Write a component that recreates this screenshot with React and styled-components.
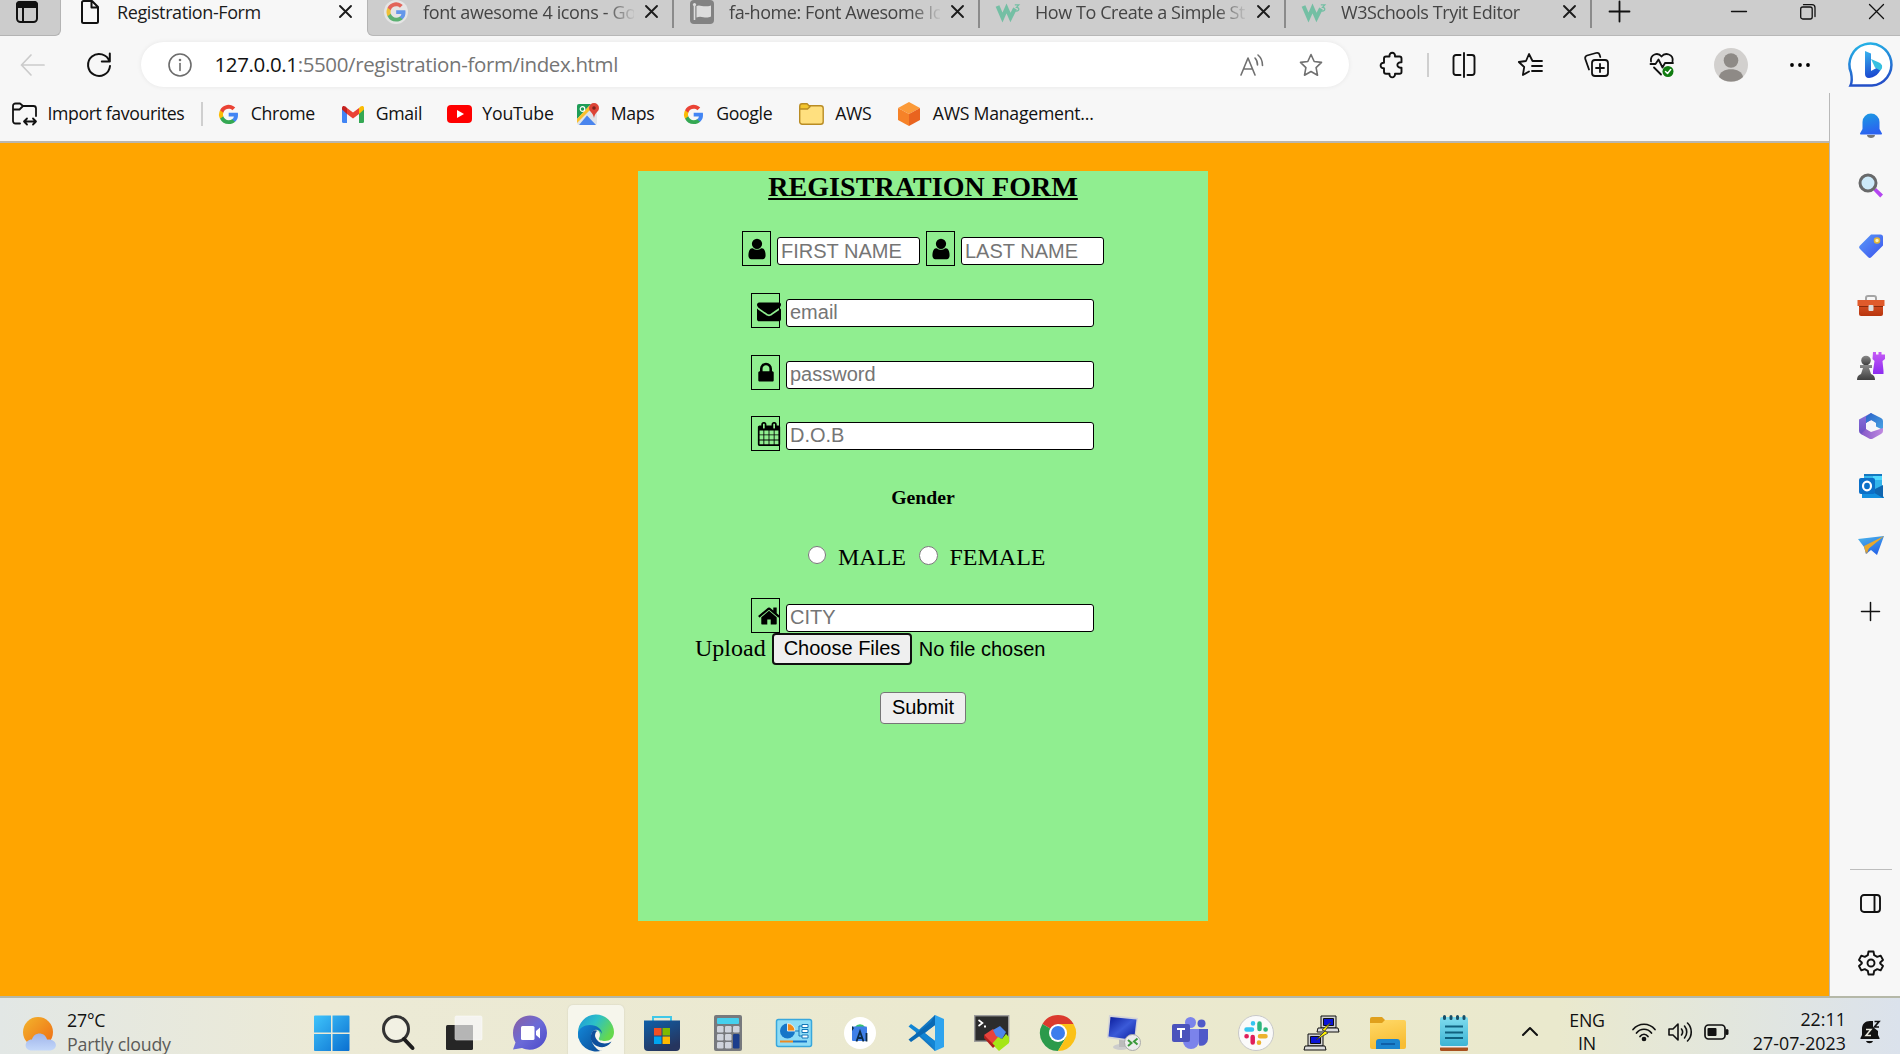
import React from "react";
import styled, { createGlobalStyle } from "styled-components";

const Global = createGlobalStyle`
  * { box-sizing: border-box; }
  body { margin: 0; overflow: hidden; font-family: "Open Sans", "Noto Sans", sans-serif; color: #111; }
  svg { display: block; flex-shrink: 0; overflow: visible; }
`;

/* ---------- layout ---------- */
const Screen = styled.div`
  width: 1900px;
  height: 1054px;
  display: flex;
  flex-direction: column;
  overflow: hidden;
`;
const TabStrip = styled.div`
  height: 36px;
  display: flex;
  background: #f7f7f7;
`;
const TabActions = styled.div`
  width: 61px;
  background: #cccccc;
  border-right: 1px solid #b4b4b4;
  border-bottom: 1px solid #b4b4b4;
  border-bottom-right-radius: 6px;
  padding: 0 0 12px 15px;
  display: flex;
  align-items: center;
`;
const InactiveTabs = styled.div`
  flex: 1;
  display: flex;
  background: #cdcdcd;
  border-left: 1px solid #b4b4b4;
  border-bottom: 1px solid #b8b8b8;
  border-bottom-left-radius: 6px;
`;
const Tab = styled.div`
  width: ${(p) => p.$w || 306}px;
  height: 28px;
  display: flex;
  align-items: center;
  padding: 0 17px 5px ${(p) => (p.$active ? 17 : 16)}px;
  gap: 15px;
  border-right: ${(p) => (p.$active ? "0" : "2px solid #8b8b8b")};
`;
const TabTitle = styled.div`
  width: 211px;
  flex-shrink: 0;
  margin-right: -4px;
  font-size: 18px;
  line-height: 24px;
  letter-spacing: ${(p) => p.$ls || -0.4}px;
  white-space: nowrap;
  color: ${(p) => (p.$active ? "#1b1b1b" : "#444")};
  mask-image: ${(p) => (p.$active ? "none" : "linear-gradient(90deg, #000 86%, transparent 101%)")};
`;
const NewTab = styled.div`
  width: 56px;
  padding-top: 1px;
  display: flex;
  justify-content: center;
  align-items: flex-start;
  margin-left: -1px;
`;
const WindowControls = styled.div`
  margin-left: auto;
  display: flex;
  gap: 53px;
  padding: 4px 16px 0 0;
`;
const Toolbar = styled.div`
  height: 57px;
  display: flex;
  align-items: center;
  background: #f7f7f7;
  padding: 0 5px 0 20px;
`;
const Gap = styled.div`
  width: ${(p) => p.$w}px;
  flex-shrink: 0;
`;
const AddressBar = styled.div`
  width: 1208px;
  height: 45px;
  border-radius: 23px;
  background: #fff;
  box-shadow: 0 0 5px rgba(0, 0, 0, 0.07);
  display: flex;
  align-items: center;
  flex-shrink: 0;
  padding: 0 26px 0 27px;
`;
const Url = styled.div`
  flex: 1;
  padding: 0 0 2px 22.5px;
  font-size: 20.5px;
  letter-spacing: -0.37px;
  color: #757575;
  white-space: nowrap;
`;
const Host = styled.span`
  color: #111;
`;
const Divider = styled.div`
  width: 2px;
  height: 24px;
  background: #cfcfcf;
  flex-shrink: 0;
`;
const Body = styled.div`
  height: 903px;
  display: flex;
`;
const Content = styled.div`
  width: 1829px;
  display: flex;
  flex-direction: column;
`;
const FavouritesBar = styled.div`
  height: 50px;
  background: #f7f7f7;
  border-bottom: 2px solid #bbb7ae;
  display: flex;
  align-items: flex-start;
  padding-left: 12px;
`;
const Favourite = styled.div`
  height: 42px;
  width: ${(p) => p.$w}px;
  display: flex;
  align-items: center;
  flex-shrink: 0;
`;
const FavIcon = styled.div`
  width: ${(p) => p.$w}px;
  flex-shrink: 0;
`;
const FavText = styled.div`
  font-size: 17.7px;
  letter-spacing: ${(p) => p.$ls || -0.36}px;
  padding-bottom: 2px;
  white-space: nowrap;
`;
const Page = styled.div`
  flex: 1;
  background: orange;
  padding: 28px 0 0 638px;
`;
const Sidebar = styled.div`
  width: 71px;
  background: #f7f7f7;
  border-left: 1px solid #b9b9b9;
  display: flex;
  flex-direction: column;
  align-items: center;
  padding: 3px 0 3px 11px;
`;
const SideCell = styled.div`
  height: ${(p) => p.$h || 60}px;
  display: flex;
  align-items: center;
  justify-content: center;
`;
const SideRule = styled.div`
  margin-top: auto;
  margin-bottom: 3px;
  width: 42px;
  height: 1px;
  background: #bdbdbd;
`;

/* ---------- form ---------- */
const Form = styled.div`
  width: 570px;
  height: 750px;
  background: lightgreen;
  display: flex;
  flex-direction: column;
  font-family: "Liberation Serif", "Times New Roman", serif;
  color: #000;
`;
const Heading = styled.h2`
  margin: 0 0 29px;
  text-align: center;
  font-size: 28px;
  letter-spacing: 0.08px;
  line-height: 31px;
  text-decoration: underline;
  text-decoration-thickness: 2px;
  text-underline-offset: 2px;
`;
const FormRow = styled.div`
  display: flex;
  align-items: flex-end;
  gap: 6px;
  height: 35px;
  flex-shrink: 0;
  margin: 0 0 ${(p) => p.$after ?? 27}px ${(p) => p.$indent || 113}px;
`;
const IconBox = styled.div`
  width: 29px;
  height: 35px;
  border: 1px solid #000;
  display: flex;
  flex-shrink: 0;
  padding: ${(p) => p.$top || 5}px 0 0 ${(p) => p.$left || 5}px;
`;
const TextField = styled.input`
  width: ${(p) => p.$w || 308}px;
  height: 28px;
  margin: 0 0 1px;
  padding: 0 3px ${(p) => (p.$w ? 0 : 1)}px;
  border: 1px solid #000;
  border-radius: 3px;
  background: #fff;
  font: 20px "Liberation Sans", Arial, sans-serif;
  &::placeholder { color: #757575; opacity: 1; }
`;
const GenderTitle = styled.h5`
  margin: 8px 0 35px;
  text-align: center;
  font-size: 19.8px;
  line-height: 22px;
`;
const GenderRow = styled.div`
  height: 28px;
  display: flex;
  padding-left: 170px;
  margin-bottom: 27px;
  font-size: 24px;
  line-height: 28px;
`;
const Radio = styled.input`
  width: ${(p) => p.$s}px;
  height: ${(p) => p.$s}px;
  margin: 3px 12px 0 0;
  flex-shrink: 0;
`;
const RadioLabel = styled.label`
  width: ${(p) => p.$w}px;
`;
const UploadRow = styled.div`
  display: flex;
  height: 32px;
  padding-left: 57px;
  gap: 6px;
  font-size: 24px;
  line-height: 30px;
  margin-bottom: 27px;
`;
const UploadLabel = styled.label`
  width: 71px;
`;
const FormButton = styled.button`
  width: ${(p) => p.$w}px;
  height: 32px;
  margin: 0 0 0 ${(p) => p.$indent || 0}px;
  padding: 0 0 ${(p) => (p.$focus ? 2 : 1)}px;
  flex-shrink: 0;
  background: #efefef;
  color: #000;
  border: ${(p) => (p.$focus ? "2px solid #101010" : "1px solid #767676")};
  border-radius: 4px;
  font: 20px "Liberation Sans", Arial, sans-serif;
  white-space: nowrap;
`;
const FileStatus = styled.span`
  padding-left: 0.7px;
  font: 20px/32px "Liberation Sans", Arial, sans-serif;
`;

/* ---------- taskbar ---------- */
const Taskbar = styled.div`
  height: 58px;
  flex-shrink: 0;
  border-top: 2px solid #b5b8a8;
  background: linear-gradient(90deg, #e2e7e5 0, #ecead6 17%, #ebe9cf 50%, #eae9cd 82%, #e2e6dd 91%, #dbe2ec 100%);
  display: flex;
`;
const Weather = styled.div`
  width: 298.5px;
  padding-left: 22px;
  display: flex;
  gap: 10px;
`;
const WeatherIcon = styled.div`
  padding-top: 18px;
`;
const Stack = styled.div`
  width: ${(p) => p.$w || "auto"};
  display: flex;
  flex-direction: column;
  padding-top: ${(p) => p.$top || 9}px;
  text-align: ${(p) => p.$align || "left"};
  font-size: 17.8px;
  line-height: ${(p) => p.$lh || 24}px;
  letter-spacing: ${(p) => p.$ls ?? -0.22}px;
  white-space: nowrap;
`;
const Muted = styled.span`
  color: #5b5b58;
`;
const AppCell = styled.div`
  width: 66px;
  height: 70px;
  flex-shrink: 0;
  display: flex;
  align-items: center;
  justify-content: center;
`;
const ActiveTile = styled.div`
  width: 56px;
  height: 56px;
  border-radius: 5px;
  background: #f6f6ec;
  box-shadow: 0 0 2px rgba(0, 0, 0, 0.12);
  display: flex;
  align-items: center;
  justify-content: center;
`;
const Tray = styled.div`
  flex: 1;
  display: flex;
`;
const TrayIcon = styled.div`
  width: ${(p) => p.$w}px;
  height: 67px;
  display: flex;
  align-items: center;
  flex-shrink: 0;
`;

/* ---------- drawing helpers ---------- */
const Line = ({ w = 24, h = 24, box = "0 0 24 24", c = "#111", sw = 1.6, children }) => (
  <svg width={w} height={h} viewBox={box} fill="none" stroke={c} strokeWidth={sw} strokeLinecap="round" strokeLinejoin="round">
    {children}
  </svg>
);
const Pic = ({ w = 36, h = 36, box = "0 0 36 36", children, ...r }) => (
  <svg width={w} height={h} viewBox={box} {...r}>{children}</svg>
);
const Grad = ({ id, a, b, x2 = 1, y2 = 1, m }) => (
  <linearGradient id={id} x1="0" y1="0" x2={x2} y2={y2}>
    <stop offset="0" stopColor={a} />
    {m && <stop offset=".5" stopColor={m} />}
    <stop offset="1" stopColor={b} />
  </linearGradient>
);
const Hidden = styled.svg`
  position: absolute;
  width: 0;
  height: 0;
`;
const Gradients = () => (
  <Hidden>
    <defs>
      <Grad id="bell" a="#1b9de2" b="#2b62f0" x2={0.3} />
      <Grad id="tag" a="#5b9bf8" b="#3b52ee" />
      <Grad id="purple" a="#c65bf5" b="#8c2bf0" x2={0} />
      <Grad id="pawn" a="#8a8a8a" b="#3f3f3f" x2={0} />
      <Grad id="box" a="#e0592a" b="#b8350e" x2={0} />
      <Grad id="sun" a="#f3b52c" b="#ee6a14" />
      <Grad id="cloud" a="#9fb4ea" b="#c4d8fa" x2={0} />
      <Grad id="win" a="#3fc4fb" b="#0a6fd0" />
      <Grad id="chat" a="#8a5fa0" m="#6b6bd8" b="#4b48c8" />
      <Grad id="store" a="#0f5fa8" b="#26355e" x2={0.5} />
      <Grad id="edgeTop" a="#1d96d8" m="#2cc0c8" b="#65d84e" y2={0.5} />
      <Grad id="edgeLow" a="#1387d8" b="#0b4a94" />
      <Grad id="bingRing" a="#25b8e8" b="#2450c8" x2={0.2} />
      <Grad id="bingB" a="#39b4ee" b="#1b48d0" x2={0.2} />
      <Grad id="folder" a="#ffd968" b="#f8bd34" x2={0.3} />
      <Grad id="note" a="#7fdcee" b="#3db4d4" x2={0} />
      <Grad id="rdp" a="#0a1c9c" m="#3b5ad8" b="#0a1c9c" />
      <Grad id="plane" a="#4cb8ea" b="#2767e8" x2={0.5} />
      <Grad id="m1" a="#8a74dc" b="#6a4cc0" x2={0} />
      <Grad id="m2" a="#2c62c8" b="#48a4e4" />
      <Grad id="m3" a="#8458c8" b="#c08ae0" y2={0} />
    </defs>
  </Hidden>
);

const Google = ({ s = 19 }) => (
  <svg width={s} height={s} viewBox="2 2 20 20">
    <path fill="#4285F4" d="M22 12.2c0-.7-.06-1.4-.18-2.1H12.2v3.9h5.5a4.7 4.7 0 0 1-2 3.1v2.6H19a10 10 0 0 0 3-7.5z" />
    <path fill="#34A853" d="M12.2 22c2.8 0 5.1-.9 6.8-2.4l-3.3-2.6c-.9.6-2.1 1-3.5 1-2.7 0-4.9-1.8-5.7-4.2H3.1v2.6A10 10 0 0 0 12.2 22z" />
    <path fill="#FBBC05" d="M6.5 13.8a6 6 0 0 1 0-3.7V7.5H3.1a10 10 0 0 0 0 9z" />
    <path fill="#EA4335" d="M12.2 6c1.5 0 2.9.5 3.9 1.5l3-2.9A10 10 0 0 0 3.1 7.5l3.4 2.6C7.3 7.700 9.500 6 12.200 6z" />
  </svg>
);
const GoogleTab = () => (
  <Pic w={24} h={24} box="0 0 24 24" opacity=".75">
    <circle cx="12" cy="12" r="12" fill="#eee" />
    <g transform="translate(2.500 2.500)"><Google s={19} /></g>
  </Pic>
);
const FlagTab = () => (
  <Pic w={24} h={24} box="0 0 24 24">
    <rect width="24" height="24" rx="4" fill="#828282" />
    <path d="M4.500 4v16" stroke="#ddd" strokeWidth="1.600" />
    <circle cx="4.500" cy="4.500" r="1.600" fill="#ddd" />
    <path d="M6.500 6c4-2 6 2 14.500-.5v11c-6 3-9-1.500-14.500 1z" fill="#dcdcdc" />
  </Pic>
);
const W3Tab = () => (
  <Pic w={24} h={24} box="0 0 24 24">
    <path d="M1.500 6l5 11.500 4-9 4 9 4.500-9" fill="none" stroke="#74bfa4" strokeWidth="4" />
    <path d="M18.800 4.800h4l-2.200 2.600c3.200 0 2.600 4-.2 3.600-.8 0-1.400-.4-1.800-1" fill="none" stroke="#74bfa4" strokeWidth="1.300" />
  </Pic>
);
const CloseX = () => (
  <Line w={13} h={13} box="0 0 13 13" sw={1.9} c="#1c1c1c"><path d="M1 1l11 11M12 1L1 12" /></Line>
);
const DocIcon = () => (
  <Line w={24} h={24} box="0 0 24 24" sw={2}><path d="M5.500 1H14l6 6v14.500a1.500 1.500 0 0 1-1.500 1.500h-13A1.500 1.500 0 0 1 4 21.500v-19A1.500 1.500 0 0 1 5.500 1zM13.500 1v6.500H20" /></Line>
);

const STAR = "M12 1.500l3.200 7 7.300.9-5.400 5.200 1.400 7.600L12 18.500l-6.500 3.700 1.400-7.600L1.500 9.400l7.300-.9z";

const ToolIcons = {
  puzzle: <Line w={24} h={26} box="0 0 24 26" sw={1.900}><path d="M4 6.500C4 5 5 4.500 6 4.500h3.500c-.5-5 6-5 5.500 0h4.500c1 0 2 .8 2 2v3.800c-5.500-.8-5.500 6.200 0 5.400V20c0 1-.9 1.800-2 1.800H15c.5 4.700-6 4.700-5.500 0H6c-1 0-2-.8-2-2v-3.500c-4.500.4-4.500-6 0-5.600z" /></Line>,
  split: <Line w={24} h={24} sw={1.900}><path d="M8.500 2H4a2.500 2.500 0 0 0-2.500 2.500v15A2.500 2.500 0 0 0 4 22h4.500M15.500 2H20a2.500 2.500 0 0 1 2.500 2.500v15A2.500 2.500 0 0 1 20 22h-4.500M12 0v24" /></Line>,
  favs: <Line w={25} h={24} box="0 0 25 24" sw={1.800}><path d="M15.500 8h-1L11 1 8 8 .8 9l5.400 5-1.300 8L11 18.500M15.500 8H24M14 13h10M14 18h10" /></Line>,
  collections: <Line w={25} h={25} box="0 0 25 25" sw={1.800}><rect x="8" y="8" width="16" height="16" rx="3" /><path d="M16 12v8M12 16h8M5 17.500L1.300 7C.8 5 1.500 4 3 3.500L12 1c2-.5 3 0 3.500 1.500l.8 2.500" /></Line>,
  health: <Line w={26} h={25} box="0 0 26 25" sw={1.800}><path d="M2 9.500C1 2 9 0 12.500 4.500 16 0 25 2 23.500 9.500M1.500 12h5l3-4.500 4 8L16 11h8M5 15.500l7 7" /><circle cx="19" cy="19.500" r="5.500" fill="#107c10" stroke="none" /><path d="M16.500 19.500l2 2 3.200-4" stroke="#fff" strokeWidth="1.500" /></Line>,
};

/* ---------- sidebar pictures ---------- */
const sideIcons = [
  <Pic w={24} h={26} box="0 0 24 26"><path d="M8 22h8c0 4-8 4-8 0z" fill="#777" /><path d="M3.500 9a8.500 8.500 0 0 1 17 0v7l2.500 4.500c0 .6-.4 1-1 1H2c-.6 0-1-.4-1-1L3.500 16z" fill="url(#bell)" /></Pic>,
  <Pic w={26} h={26} box="0 0 26 26"><path d="M15.500 17.500l2.500-2.500 7 6.500-2.800 3z" fill="#b445f0" /><circle cx="10" cy="10" r="8" fill="#cdeaf9" stroke="#68696a" strokeWidth="3" /></Pic>,
  <Pic w={26} h={26} box="0 0 26 26"><path d="M13 1.500h9.500A2.500 2.500 0 0 1 25 4v8.500L13.500 24c-1.200 1.200-2.400 1.200-3.500 0l-8-8c-1.200-1.200-1.200-2.300 0-3.500z" fill="url(#tag)" /><circle cx="19" cy="7.500" r="2.500" fill="#fff2b0" stroke="#e2b537" strokeWidth="1.500" /></Pic>,
  <Pic w={28} h={22} box="0 0 28 22"><path d="M9 6V3a2 2 0 0 1 2-2h6a2 2 0 0 1 2 2v3" fill="none" stroke="#a5a5a5" strokeWidth="2" /><rect x="2" y="5" width="24" height="16" rx="2" fill="url(#box)" /><path d="M0.500 5h27v6h-27z" fill="#e05a2b" /><path d="M2 11.500h24" stroke="#8a2a0c" /><rect x="11.500" y="10" width="5" height="6" rx="1" fill="#ddd" /></Pic>,
  <Pic w={28} h={28} box="0 0 28 28"><path d="M16 0h3v2.500h2.500V0h3v2.500H28V7l-2.500 2 1 10v3H16v-3l1.500-10L15.500 7z" fill="url(#purple)" /><circle cx="9" cy="8.500" r="4.800" fill="url(#pawn)" /><path d="M3 13h12v3h-3l2 6c3 1 4 3 4 6H0c0-3 1-5 4-6l2-6H3z" fill="url(#pawn)" /></Pic>,
  <Pic w={26} h={26} box="0 0 26 26"><path d="M13 0L1 6.500V18q0 2 2 3l5 2V10l9-5z" fill="url(#m1)" /><path d="M13 0l10 5q2 1 2 3v9l-7-3.500V10l-5-3-5 3V3.500z" fill="url(#m2)" /><path d="M25 15v3q0 2-2 3l-8 4.500q-2 1-4 0L3 21l5-5 5 3z" fill="url(#m3)" /><circle cx="13" cy="13" r="4.800" fill="#f5f5fb" /></Pic>,
  <Pic w={26} h={26} box="0 0 26 26"><path d="M6 1h18v15H6z" fill="#33b5ec" /><path d="M15 1h9v6h-9z" fill="#50d9ff" /><path d="M6 1h18v2H6z" fill="#1478c0" /><path d="M4 11l22 13v1H4z" fill="#1490df" /><path d="M25 12v13L13 18z" fill="#1066b0" /><rect x="1" y="5" width="16" height="16" rx="2" fill="#0b70c8" /><ellipse cx="9" cy="13" rx="4" ry="4.300" fill="none" stroke="#fff" strokeWidth="2.200" /></Pic>,
  <Pic w={28} h={22} box="0 0 28 22"><path d="M1 4L27 1 20 20l-6-5-5 4-2-7z" fill="url(#plane)" /><path d="M27 1L8 12l2 7 2-6z" fill="#d59a35" /><path d="M7 11L27 1 10 15l-1 4z" fill="#e9a82e" /></Pic>,
];

/* ---------- taskbar pictures ---------- */
const Putty = ({ x, y }) => (
  <g transform={`translate(${x} ${y})`} stroke="#111" strokeWidth="1">
    <path d="M4 1h15v12H4z" fill="#d2d2d2" /><path d="M6.500 3.500h10v7h-10z" fill="#0a14d8" /><path d="M1 13h20l1 4H0z" fill="#ddd" />
  </g>
);
const apps = [
  <Pic><g fill="url(#win)"><path d="M0 1.500Q0 .5 1 .5h16v17H0zM18.500.5H34.500q1 0 1 1v16h-17zM0 19h17v17H1q-1 0-1-1zM18.500 19h17v16q0 1-1 1h-16z" /></g></Pic>,
  <Pic w={34} box="0 0 34 36"><circle cx="15" cy="14" r="12.500" fill="rgba(255,255,255,.35)" stroke="#333" strokeWidth="3" /><path d="M23 24l8.500 9" stroke="#1d1d1d" strokeWidth="4" strokeLinecap="round" /></Pic>,
  <Pic><rect x="0" y="10" width="27" height="25" rx="1.500" fill="#262626" /><rect x="9" y="1" width="27" height="24" rx="1.500" fill="#f6f6f6" fillOpacity=".82" stroke="#fff" strokeWidth=".5" /><path d="M9 10h18v15H9z" fill="#9a9a9a" fillOpacity=".5" /></Pic>,
  <Pic w={34} box="0 0 34 36"><path d="M17 .5C7 .5 0 8 0 18c0 4 1 7 2.500 9.500L0 34.500l9-1.500c12 5.500 25-3 25-15C34 8 27 .5 17 .5z" fill="url(#chat)" /><rect x="8" y="11" width="13.500" height="14" rx="1.500" fill="#fff" /><path d="M23 16l4-3.500v11L23 20z" fill="#fff" /></Pic>,
  null,
  <Pic><path d="M9 8V2h18v6" fill="none" stroke="#41c8e8" strokeWidth="2" /><path d="M0 5.500h36V32a4 4 0 0 1-4 4H4a4 4 0 0 1-4-4z" fill="url(#store)" /><path d="M10 13h7.500v7.500H10z" fill="#f25022" /><path d="M18.500 13H26v7.500h-7.500z" fill="#7fba00" /><path d="M10 21.500h7.500V29H10z" fill="#00a4ef" /><path d="M18.500 21.500H26V29h-7.500z" fill="#ffb900" /></Pic>,
  <Pic w={28} box="0 0 28 36"><rect width="28" height="36" rx="2" fill="#77797d" /><rect x="3" y="3" width="22" height="6" rx="1" fill="#45d0ee" />{[11, 19, 27].map((y) => [3, 11, 19].map((x) => (x === 19 && y > 11 ? null : <rect key={x + "-" + y} x={x} y={y} width="6.500" height="6.500" rx="1.200" fill="#cfd3dc" />)))}<rect x="19" y="19" width="6.500" height="14.500" rx="1.200" fill="#1c3e8c" /></Pic>,
  <Pic h={28} box="0 0 36 28"><rect x=".5" y=".5" width="35" height="27" rx="2" fill="#8edcf6" stroke="#38a7dc" strokeWidth="1.500" /><circle cx="11.500" cy="12" r="7.500" fill="#1676c8" /><path d="M11.500 12V4.500A7.500 7.500 0 0 1 19 12z" fill="#f08a1c" stroke="#fff" strokeWidth=".8" /><path d="M19 12h4V7h3M23 12v5h3" fill="none" stroke="#1477b8" /><path d="M26 5.500h6v3h-6zM26 10.500h6v3h-6zM26 16h6v3h-6z" fill="#fff" stroke="#1477b8" /><path d="M4 22.500h13" stroke="#ee8a22" strokeWidth="2" /><path d="M17 22.500h14" stroke="#1676c8" strokeWidth="2" /></Pic>,
  <Pic w={32} h={32} box="0 0 32 32"><circle cx="16" cy="16" r="16" fill="#fff" /><path d="M11 10a5.500 4.500 0 0 1 10 0z" fill="#38c172" /><rect x="8" y="9.500" width="15" height="14.500" rx="1" fill="#3f7fe8" /><path d="M8 9l2 2-2 3z" fill="#0d2c48" /><path d="M12.500 24.500l3.500-10 3.500 10M14 21h4M22.500 16v8.500" fill="none" stroke="#0d2c48" strokeWidth="1.800" /></Pic>,
  <Pic><path d="M27 0L7.500 18 27 36l1-9-11-9 11-9z" fill="#1579c4" /><path d="M3 9L.5 11.500 23 29l4 7 1-9.500z" fill="#1285d4" /><path d="M3 27L.5 24.500 23 7l4-7 1 9.500z" fill="#0a69b4" /><path d="M27 0l9 4v28l-9 4z" fill="#2ea3ee" /></Pic>,
  <Pic><rect x=".7" y=".7" width="34" height="25.500" fill="#2c2c2c" stroke="#9b9b9b" strokeWidth="1.400" /><path d="M4.500 5l4 3-4 3" stroke="#fff" strokeWidth="1.600" fill="none" /><path d="M10 11.500h2" stroke="#fff" strokeWidth="2" /><path d="M10 20l9-6 4 4 3 5-7 9z" fill="#e8433c" /><path d="M19 15l7-4 6 6-4 7-6-3z" fill="#4d86ea" /><path d="M18 29l6-7 4 2 4-5 3 3v6l-10 8z" fill="#a5e616" /><path d="M10 20v3l9 10 2-2z" fill="#b0201c" /></Pic>,
  <Pic><path d="M18 18L2.400 9A18 18 0 0 1 33.600 9z" fill="#db3a2e" /><path d="M18 18L2.400 9A18 18 0 0 0 18 36l8-13.500z" fill="#2b9a4b" /><path d="M18 9h15.600A18 18 0 0 1 18 36l8-13.500z" fill="#fbc116" /><circle cx="18" cy="18" r="9" fill="#fff" /><circle cx="18" cy="18" r="7" fill="#3b7ded" /></Pic>,
  <Pic><ellipse cx="15" cy="32" rx="8" ry="3" fill="#ccc" /><path d="M13 24h6v8h-6z" fill="#bbb" /><path d="M3 0l29 3-3 24L1 23z" fill="#d3d3d8" /><path d="M4.500 2l26 2.500L28 25 2.500 21.500z" fill="url(#rdp)" /><circle cx="26.500" cy="27.500" r="8" fill="#ececec" stroke="#aaa" /><path d="M22 25l3.500 3-3.500 3M31.500 23.500l-3.500 3 3.500 3" stroke="#3c9a3c" strokeWidth="2" fill="none" /></Pic>,
  <Pic><circle cx="18.500" cy="7.500" r="5.500" fill="#7b83eb" /><circle cx="29.500" cy="8.500" r="4" fill="#5059c9" /><path d="M25 14h11v10a7 7 0 0 1-9 6.500z" fill="#5059c9" /><path d="M11 14h16v12a8 8 0 0 1-16 0z" fill="#7b83eb" /><rect y="9" width="18" height="18" rx="2" fill="#4b53bc" /><path d="M5 14h8M9 14v9" stroke="#fff" strokeWidth="2" /></Pic>,
  <Pic><circle cx="18" cy="18" r="17.500" fill="#fafafa" stroke="#c8c8c8" /><g strokeWidth="4.500" strokeLinecap="round"><g stroke="#36c5f0"><path d="M8.500 14.500H14M15 8.200v.2" /></g><g stroke="#2eb67d"><path d="M21.500 8.500V14M27.500 14.500h.2" /></g><g stroke="#ecb22e"><path d="M22 21.200h5.500M21 27.500v.2" /></g><g stroke="#e01e5a"><path d="M14.700 22v5.500M8.500 21.200h.2" /></g></g></Pic>,
  <Pic><Putty x={13} y={0} /><Putty x={0} y={18} /><path d="M27 7l-9 8 3 1-9 9 12-7-3-2z" fill="#fff200" stroke="#333" strokeWidth=".8" /></Pic>,
  <Pic><path d="M0 4a2 2 0 0 1 2-2h10l4 4v4H0z" fill="#e0a01c" /><path d="M0 8h12l3-3h19a2 2 0 0 1 2 2v25a2 2 0 0 1-2 2H2a2 2 0 0 1-2-2z" fill="url(#folder)" /><path d="M6 34v-7a3 3 0 0 1 3-3h18a3 3 0 0 1 3 3v7z" fill="#1b85cf" /><path d="M11 29h14" stroke="#0d5ba5" strokeWidth="1.800" /></Pic>,
  <Pic w={28} box="0 0 28 36"><rect x="0" y="31" width="28" height="5" rx="1.500" fill="#a9511f" /><rect x="0" y="29" width="28" height="3.500" fill="#eee" /><rect y="2" width="28" height="29" rx="2" fill="url(#note)" /><g stroke="#10617f" strokeWidth="1.800"><path d="M5 11.500h18M5 17.500h18M5 23h18" /></g><g stroke="#174e66" strokeWidth="3" strokeLinecap="round"><path d="M4.500 1.500v2M11 1.500v2M17.500 1.500v2M24 1.500v2" /></g></Pic>,
];
const Edge = () => (
  <Pic>
    <path d="M0 18A18 18 0 0 1 36 17c0 6-4 9-9 9-4 0-7-1-6-3 2-3 1-9-6-9-8 0-13 5-15 10z" fill="url(#edgeTop)" />
    <path d="M0 18c1-5 6-8 12-8 7 0 12 4 12 9-1-3-4-5-7-4-6 2-5 13 2 19 2 2 5 2 5 1.500A18 18 0 0 1 0 18z" fill="url(#edgeLow)" />
    <path d="M13 20c-2 8 6 13 13 12 4-1 6-3 7.500-5.500C28 30 19 29 17 21c0-3 1-5 3-5-4-2-6 0-7 4z" fill="#0d4f9c" />
  </Pic>
);

/* Font Awesome 4 glyphs on a 1792 grid */
const GLYPHS = {
  user: "M1536 1399q0 109-62.500 187t-150.500 78h-854q-88 0-150.500-78t-62.500-187q0-85 8.500-160.500t31.500-152 58.500-131 94-89 134.500-34.500q131 128 313 128t313-128q76 0 134.500 34.500t94 89 58.500 131 31.500 152 8.500 160.500zm-256-887q0 159-112.500 271.500t-271.500 112.500-271.500-112.500-112.500-271.500 112.500-271.500 271.500-112.500 271.500 112.500 112.500 271.500z",
  envelope: "M1792 710v794q0 66-47 113t-113 47h-1472q-66 0-113-47t-47-113v-794q44 49 101 87 362 246 497 345 57 42 92.500 65.500t94.500 48 110 24.500h2q51 0 110-24.500t94.500-48 92.500-65.500q170-123 498-345 57-39 100-87zm0-294q0 79-49 151t-122 123q-376 261-468 325-10 7-42.500 31t-54 38.500-52 32.500-57.500 27-50 9h-2q-23 0-50-9t-57.500-27-52-32.500-54-38.500-42.500-31q-91-64-262-182.500t-205-142.500q-62-42-117-115.500t-55-136.500q0-78 41.500-130t118.500-52h1472q65 0 112.500 47t47.500 113z",
  lock: "M640 768h512v-192q0-106-75-181t-181-75-181 75-75 181v192zm832 96v576q0 40-28 68t-68 28h-960q-40 0-68-28t-28-68v-576q0-40 28-68t68-28h32v-192q0-184 132-316t316-132 316 132 132 316v192h32q40 0 68 28t28 68z",
  home: "M1472 992v480q0 26-19 45t-45 19h-384v-384h-256v384h-384q-26 0-45-19t-19-45v-480q0-1 .5-3t.5-3l575-474 575 474q1 2 1 6zm223-69l-62 74q-8 9-21 11h-3q-13 0-21-7l-692-577-692 577q-12 8-24 7-13-2-21-11l-62-74q-8-10-7-23.500t11-21.500l719-599q32-26 76-26t76 26l244 204v-195q0-14 9-23t23-9h192q14 0 23 9t9 23v408l219 182q10 8 11 21.500t-7 23.500z",
  calendar: "M192 1664h288v-288h-288v288zm352 0h320v-288h-320v288zm-352-352h288v-320h-288v320zm352 0h320v-320h-320v320zm-352-384h288v-288h-288v288zm736 736h320v-288h-320v288zm-384-736h320v-288h-320v288zm768 736h288v-288h-288v288zm-384-352h320v-320h-320v320zm-352-864v-288q0-13-9.500-22.500t-22.500-9.500h-64q-13 0-22.500 9.500t-9.500 22.500v288q0 13 9.500 22.500t22.500 9.500h64q13 0 22.500-9.500t9.500-22.500zm736 864h288v-320h-288v320zm-384-384h320v-288h-320v288zm384 0h288v-288h-288v288zm32-480v-288q0-13-9.500-22.500t-22.500-9.500h-64q-13 0-22.500 9.500t-9.500 22.500v288q0 13 9.500 22.500t22.500 9.500h64q13 0 22.500-9.500t9.500-22.500zm384-64v1280q0 52-38 90t-90 38h-1408q-52 0-90-38t-38-90v-1280q0-52 38-90t90-38h128v-96q0-66 47-113t113-47h64q66 0 113 47t47 113v96h384v-96q0-66 47-113t113-47h64q66 0 113 47t47 113v96h128q52 0 90 38t38 90z",
};
const FieldIcon = ({ name, left, top }) => (
  <IconBox $left={left} $top={top}>
    <svg width="24" height="24" viewBox="0 0 1792 1792"><path d={GLYPHS[name]} /></svg>
  </IconBox>
);

const tabs = [
  { icon: <GoogleTab />, title: "font awesome 4 icons - Go", ls: -0.35 },
  { icon: <FlagTab />, title: "fa-home: Font Awesome Ic", ls: -0.42 },
  { icon: <W3Tab />, title: "How To Create a Simple St", ls: -0.42 },
  { icon: <W3Tab />, title: "W3Schools Tryit Editor", ls: -0.42 },
];

const Gmail = () => (
  <Pic w={22} h={17} box="0 0 22 17"><path d="M0 2v13.500A1.500 1.500 0 0 0 1.500 17H5V6z" fill="#4285f4" /><path d="M22 2v13.500a1.500 1.500 0 0 1-1.500 1.500H17V6z" fill="#34a853" /><path d="M0 3.500V2C0 0 2 -.5 3.500.6L5 2v6z" fill="#c5221f" /><path d="M22 3.500V2c0-2-2-2.500-3.500-1.400L17 2v6z" fill="#fbbc04" /><path d="M5 2l6 4.500L17 2v6l-6 4.500L5 8z" fill="#ea4335" /></Pic>
);
const YouTube = () => (
  <Pic w={25} h={18} box="0 0 25 18"><rect width="25" height="18" rx="4" fill="#f00" /><path d="M10 5l7 4-7 4z" fill="#fff" /></Pic>
);
const Maps = () => (
  <Pic w={22} h={24} box="0 0 22 24"><rect y="2" width="20" height="21" rx="2" fill="#dfe3e8" /><path d="M0 4a2 2 0 0 1 2-2h12L0 17z" fill="#1f9d57" /><path d="M0 17v4L14 7l-2-3z" fill="#fbc02d" /><path d="M2 23L10 13.500l9 9.500z" fill="#4a85ee" /><circle cx="5.500" cy="7" r="2.300" fill="none" stroke="#fff" strokeWidth="1.200" /><path d="M17 1a5 5 0 0 0-5 5c0 4 4 4 5 10 1-6 5-6 5-10a5 5 0 0 0-5-5z" fill="#dc4437" /><circle cx="17" cy="6" r="1.800" fill="#7b231e" /></Pic>
);
const Folder = () => (
  <Pic w={25} h={22} box="0 0 25 22"><rect x=".7" y="2.700" width="23.500" height="18.500" rx="2.500" fill="#ffe07f" stroke="#b98c24" strokeWidth="1.400" /><path d="M.8 6V3A2.200 2.200 0 0 1 3 .8h5l3 3L8.500 6z" fill="#f2c52e" stroke="#b98c24" strokeWidth="1.400" /></Pic>
);
const Cube = () => (
  <Pic w={24} h={24} box="0 0 24 24"><path d="M12 0l11 6-11 6L1 6z" fill="#fb9a38" /><path d="M1 6l11 6v12L1 18z" fill="#f68228" /><path d="M23 6l-11 6v12l11-6z" fill="#e9641f" /></Pic>
);
const ImportIcon = () => (
  <Line w={25} h={24} box="0 0 25 24" sw={1.800}><path d="M8 21.500H3.500A2.500 2.500 0 0 1 1 19V4a2.500 2.500 0 0 1 2.500-2.500H8L11 4h10.500A2.500 2.500 0 0 1 24 6.500V14M1 7.500h6.500L11 4M12 19.500h12M15 16.500l-3 3 3 3M21 16.500l3 3-3 3" /></Line>
);

const favourites = [
  { w: 189, icon: <ImportIcon />, iw: 35.500, label: "Import favourites", ls: -0.380 },
  { w: 123, icon: <Google />, iw: 32, label: "Chrome" },
  { w: 105, icon: <Gmail />, iw: 34, label: "Gmail" },
  { w: 130.500, icon: <YouTube />, iw: 35.500, label: "YouTube", ls: -0.2 },
  { w: 106.500, icon: <Maps />, iw: 33.500, label: "Maps" },
  { w: 115, icon: <Google />, iw: 32.500, label: "Google" },
  { w: 98, icon: <Folder />, iw: 36.500, label: "AWS" },
  { w: 220, icon: <Cube />, iw: 36, label: "AWS Management...", ls: -0.26 },
];

export default function App() {
  return (
    <Screen>
      <Global />
      <Gradients />
      <TabStrip>
        <TabActions>
          <Line w={24} h={24} sw={2}><rect x="2" y="2" width="20" height="20" rx="3.500" /><path d="M8 7v15" /><path d="M2 7V4.500A2.500 2.500 0 0 1 4.500 2h15A2.500 2.500 0 0 1 22 4.500V7z" fill="#111" /></Line>
        </TabActions>
        <Tab $active $w={306}>
          <DocIcon />
          <TabTitle $active>Registration-Form</TabTitle>
          <CloseX />
        </Tab>
        <InactiveTabs>
          {tabs.map((t) => (
            <Tab key={t.title}>
              {t.icon}
              <TabTitle $ls={t.ls}>{t.title}</TabTitle>
              <CloseX />
            </Tab>
          ))}
          <NewTab><Line w={21} h={21} box="0 0 21 21" sw={1.800}><path d="M10.500.5v20M.5 10.500h20" /></Line></NewTab>
          <WindowControls>
            <Line w={16} h={16} box="0 0 16 16" sw={1.300}><path d="M.5 7.500h15" /></Line>
            <Line w={16} h={16} box="0 0 16 16" sw={1.300}><rect x=".7" y="3" width="11.500" height="12" rx="2" /><path d="M3.500.7H12A3 3 0 0 1 15 3.700V12.500" /></Line>
            <Line w={15} h={15} box="0 0 15 15" sw={1.300}><path d="M.5.5l14 14M14.500.5l-14 14" /></Line>
          </WindowControls>
        </InactiveTabs>
      </TabStrip>

      <Toolbar>
        <Line w={25} h={22} box="0 0 25 22" c="#cbcbcb" sw={1.700}><path d="M24 11H1.500M11 1L1.500 11 11 21" /></Line>
        <Gap $w={42} />
        <Line w={24} h={26} box="0 0 24 26" sw={2}><path d="M22.500 9.500A11 11 0 1 0 23 14M22.800 1.500v8h-8" /></Line>
        <Gap $w={30} />
        <AddressBar>
          <Line c="#6c6c6c" sw={1.600}><circle cx="12" cy="12" r="11" /><path d="M12 10.500v7" /><circle cx="12" cy="7" r=".5" fill="#6c6c6c" /></Line>
          <Url><Host>127.0.0.1</Host>:5500/registration-form/index.html</Url>
          <Line w={24} h={22} box="0 0 24 22" c="#707070" sw={1.600}><path d="M1 21L8 4l7 17M3.500 15h9M15 4c2 2 2.500 4.500 2.500 7M18 1c3 2.500 4.500 6 4.500 10.500" /></Line>
          <Gap $w={35} />
          <Line c="#707070" sw={1.600}><path d={STAR} /></Line>
        </AddressBar>
        <Gap $w={31} />
        {ToolIcons.puzzle}
        <Gap $w={23} />
        <Divider />
        <Gap $w={23} />
        {ToolIcons.split}
        <Gap $w={42} />
        {ToolIcons.favs}
        <Gap $w={41} />
        {ToolIcons.collections}
        <Gap $w={40} />
        {ToolIcons.health}
        <Gap $w={39} />
        <Pic w={34} h={34} box="0 0 34 34"><circle cx="17" cy="17" r="17" fill="#d2d0ce" /><circle cx="17" cy="12.500" r="7.300" fill="#8e8a86" /><path d="M5 29C6 18.500 28 18.500 29 29c-6 6-18 6-24 0z" fill="#8e8a86" /></Pic>
        <Gap $w={42} />
        <Pic w={20} h={4} box="0 0 20 4"><circle cx="2" cy="2" r="1.900" /><circle cx="10" cy="2" r="1.900" /><circle cx="18" cy="2" r="1.900" /></Pic>
        <Gap $w={39} />
        <Pic w={45} h={45} box="0 0 45 45"><path d="M1.500 43.500c2-4 1.500-8 .5-13A21 21 0 1 1 23 43.500z" fill="#fff" stroke="url(#bingRing)" strokeWidth="2.500" /><path d="M16 9l6 2.500V29l11-6c-1 9-9 13-13 13-3 0-4-2-4-4z" fill="url(#bingB)" /><path d="M22 17l8 3.500c4 2 4 6 1 8l-5-3z" fill="#35c0e0" /></Pic>
      </Toolbar>

      <Body>
        <Content>
          <FavouritesBar>
            {favourites.map((f, i) => (
              <React.Fragment key={i}>
                <Favourite $w={f.w}>
                  <FavIcon $w={f.iw}>{f.icon}</FavIcon>
                  <FavText $ls={f.ls}>{f.label}</FavText>
                </Favourite>
                {i === 0 && (
                  <Favourite $w={17.8}><Divider /></Favourite>
                )}
              </React.Fragment>
            ))}
          </FavouritesBar>
          <Page>
            <Form>
              <Heading>REGISTRATION FORM</Heading>
              <FormRow $indent={104}>
                <FieldIcon name="user" left={1.5} top={5.3} />
                <TextField $w={143} placeholder="FIRST NAME" />
                <FieldIcon name="user" left={1.5} top={5.3} />
                <TextField $w={143} placeholder="LAST NAME" />
              </FormRow>
              <FormRow>
                <FieldIcon name="envelope" />
                <TextField placeholder="email" />
              </FormRow>
              <FormRow $after={26}>
                <FieldIcon name="lock" left={2.3} top={4.6} />
                <TextField placeholder="password" />
              </FormRow>
              <FormRow>
                <FieldIcon name="calendar" left={4.5} top={5.3} />
                <TextField placeholder="D.O.B" />
              </FormRow>
              <GenderTitle>Gender</GenderTitle>
              <GenderRow>
                <Radio type="radio" name="gender" $s={18} />
                <RadioLabel $w={80.5}>MALE</RadioLabel>
                <Radio type="radio" name="gender" $s={19} />
                <RadioLabel $w={100}>FEMALE</RadioLabel>
              </GenderRow>
              <FormRow $after={0}>
                <FieldIcon name="home" left={4.5} />
                <TextField placeholder="CITY" />
              </FormRow>
              <UploadRow>
                <UploadLabel>Upload</UploadLabel>
                <FormButton $w={140} $focus type="button">Choose Files</FormButton>
                <FileStatus>No file chosen</FileStatus>
              </UploadRow>
              <FormButton $w={86} $indent={242} type="button">Submit</FormButton>
            </Form>
          </Page>
        </Content>
        <Sidebar>
          {sideIcons.map((icon, i) => <SideCell key={i}>{icon}</SideCell>)}
          <SideCell $h={70}><Line w={19} h={19} box="0 0 19 19" sw={1.500}><path d="M9.500.5v18M.5 9.500h18" /></Line></SideCell>
          <SideRule />
          <SideCell><Line w={21} h={19} box="0 0 21 19" sw={1.900}><rect x="1" y="1" width="19" height="17" rx="3" /><path d="M14.500 1v17" /></Line></SideCell>
          <SideCell><Line w={26} h={26} box="0 0 26 26" sw={1.900}><path d="M10.500 1.500h5l.7 3.700 3 1.700 3.500-1.300L25 10l-2.800 2.500v1L25 16l-2.300 4.400-3.500-1.300-3 1.700-.7 3.700h-5l-.7-3.700-3-1.700-3.500 1.300L1 16l2.800-2.500v-1L1 10l2.300-4.400 3.500 1.300 3-1.700z" /><circle cx="13" cy="13" r="3.500" /></Line></SideCell>
        </Sidebar>
      </Body>

      <Taskbar>
        <Weather>
          <WeatherIcon>
            <Pic w={35} h={35} box="0 0 35 35"><circle cx="16" cy="16" r="15" fill="url(#sun)" /><path d="M10 34.500c-9 0-8-11 0-11 2-8 13-8 15 0 11-1 12 11 2 11z" fill="url(#cloud)" /></Pic>
          </WeatherIcon>
          <Stack $top={9.5}><span>27°C</span><Muted>Partly cloudy</Muted></Stack>
        </Weather>
        {apps.map((a, i) => (
          <AppCell key={i}>
            {a || <ActiveTile><Edge /></ActiveTile>}
          </AppCell>
        ))}
        <Tray>
          <Gap $w={35.5} />
          <TrayIcon $w={40}><Line w={16} h={9} box="0 0 16 9" sw={2}><path d="M1 8l7-7 7 7" /></Line></TrayIcon>
          <Stack $w="50px" $align="center" $top={11} $lh={23}><span>ENG</span><span>IN</span></Stack>
          <Gap $w={20} />
          <TrayIcon $w={36}><Line w={24} h={18} box="0 0 24 18" sw={1.700}><path d="M1 6.500C7-.5 17-.5 23 6.500M4.500 10c4-5 11-5 15 0M8 13.500c2-3 6-3 8 0" /><circle cx="12" cy="16" r="1.500" fill="#111" /></Line></TrayIcon>
          <TrayIcon $w={36}><Line w={24} h={20} box="0 0 24 20" sw={1.600}><path d="M1 7v6h4l5 5V2L5 7zM13.500 7c1.500 2 1.500 4 0 6M16.500 4c3 3.500 3 8.500 0 12M19.500 1c5 5 5 13 0 18" /></Line></TrayIcon>
          <TrayIcon $w={44}><Line w={25} h={16} box="0 0 25 16" sw={1.700}><rect x="1" y="1" width="20" height="14" rx="3.500" /><rect x="3.500" y="4" width="9" height="8" rx="1" fill="#111" stroke="none" /><path d="M23 6.500v3" strokeWidth="3" /></Line></TrayIcon>
          <Stack $w="98px" $align="right" $ls={0.05}><span>22:11</span><span>27-07-2023</span></Stack>
          <Gap $w={13} />
          <TrayIcon $w={24}>
            <Pic w={22} h={24} box="0 0 22 24"><path d="M1.500 18l1.500-3V9c0-5 3-8 8-8h3v6l5 4v4l1.500 3v1h-19z" fill="#111" /><path d="M7 21h7c-1 3-6 3-7 0z" fill="#111" /><path d="M7 9.500h5l-5 6h5" fill="none" stroke="#ecece0" strokeWidth="1.500" /><path d="M15.500 1.500H20l-4.500 5.500H20" fill="none" stroke="#111" strokeWidth="1.700" /></Pic>
          </TrayIcon>
        </Tray>
      </Taskbar>
    </Screen>
  );
}
